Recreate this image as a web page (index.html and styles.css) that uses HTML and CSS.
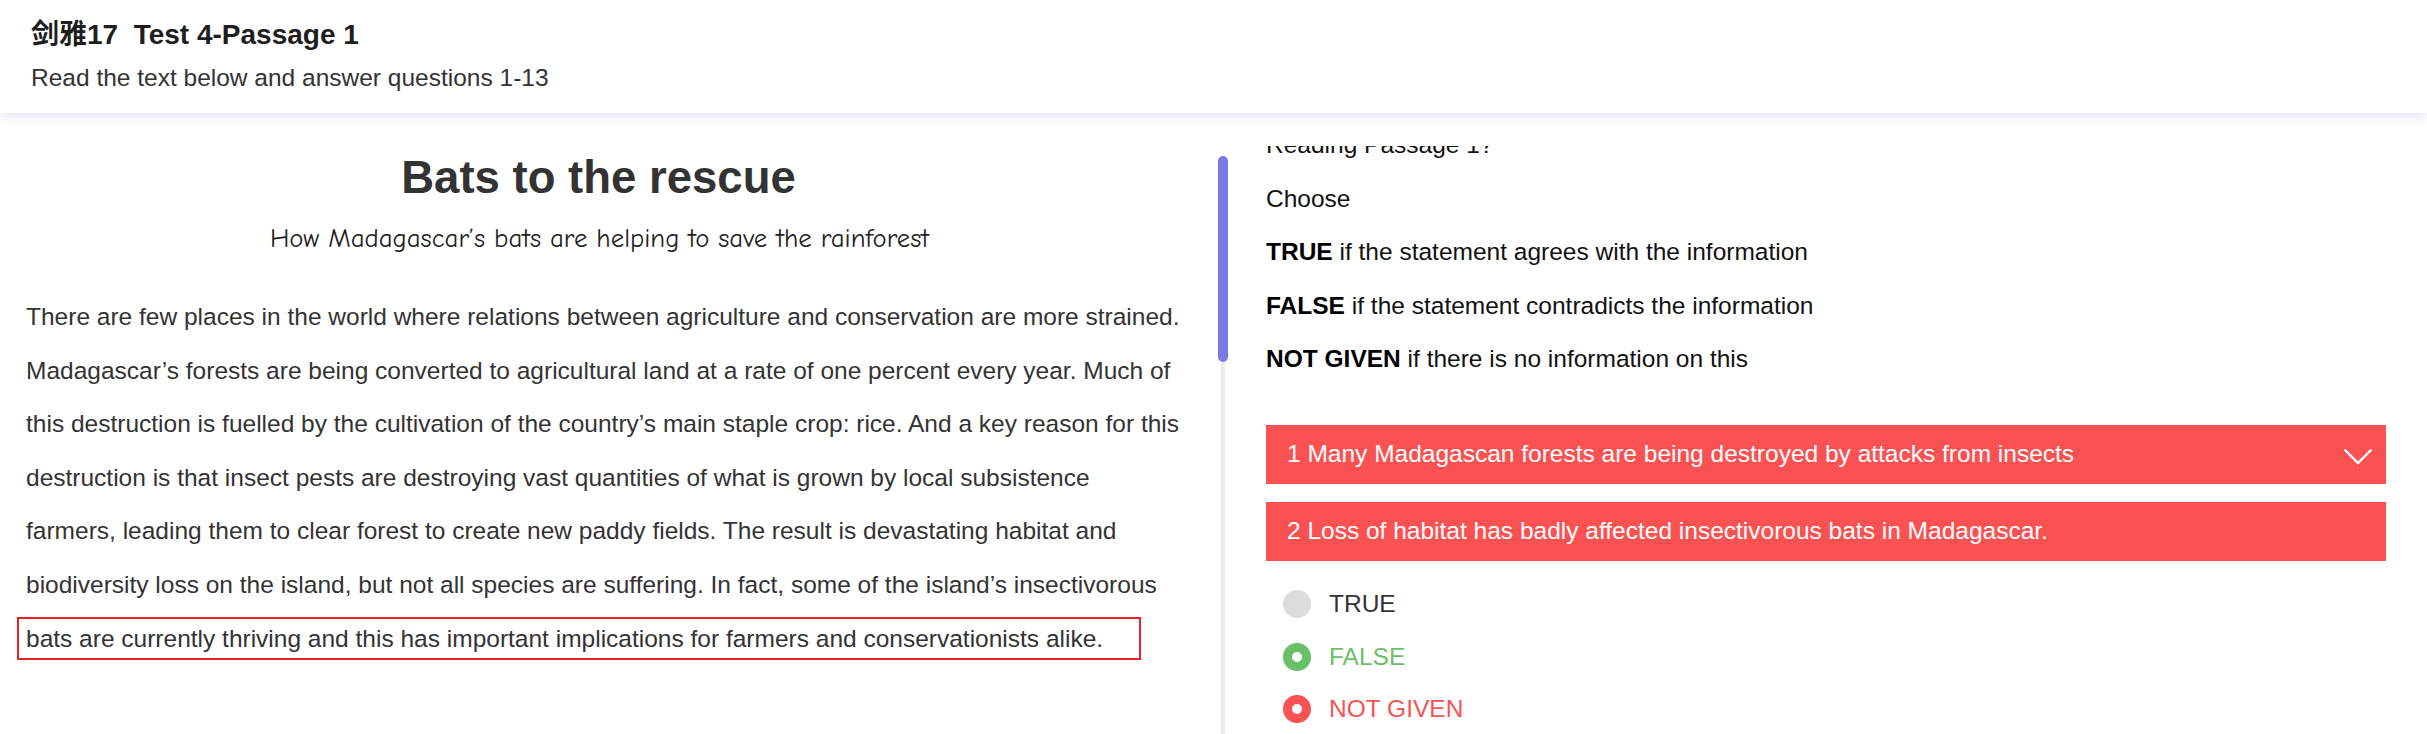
FILE: index.html
```html
<!DOCTYPE html>
<html lang="en">
<head>
<meta charset="utf-8">
<title>剑雅17 Test 4-Passage 1</title>
<link rel="stylesheet" href="styles.css">
</head>
<body>
<header class="top">
  <h1 class="top-title">剑雅17&nbsp;&nbsp;Test 4-Passage 1</h1>
  <p class="top-sub">Read the text below and answer questions 1-13</p>
</header>
<main class="layout">
  <section class="passage">
    <h2 class="passage-title">Bats to the rescue</h2>
    <p class="passage-sub">How Madagascar’s bats are helping to save the rainforest</p>
    <p class="passage-body">There are few places in the world where relations between agriculture and conservation are more strained. Madagascar’s forests are being converted to agricultural land at a rate of one percent every year. Much of this destruction is fuelled by the cultivation of the country’s main staple crop: rice. And a key reason for this destruction is that insect pests are destroying vast quantities of what is grown by local subsistence farmers, leading them to clear forest to create new paddy fields. The result is devastating habitat and biodiversity loss on the island, but not all species are suffering. In fact, some of the island’s insectivorous <span class="mark">bats are currently thriving and this has important implications for farmers and conservationists alike.</span></p>
  </section>
  <div class="scrollbar">
    <div class="scroll-thumb"></div>
    <div class="scroll-track"></div>
  </div>
  <section class="questions">
    <div class="questions-inner">
      <p class="q-line">Reading Passage 1?</p>
      <p class="q-line">Choose</p>
      <p class="q-line"><b>TRUE</b> if the statement agrees with the information</p>
      <p class="q-line"><b>FALSE</b> if the statement contradicts the information</p>
      <p class="q-line"><b>NOT GIVEN</b> if there is no information on this</p>
      <div class="q-bar q-bar-first">
        <span>1 Many Madagascan forests are being destroyed by attacks from insects</span>
        <svg class="chev" width="30" height="17" viewBox="0 0 30 17" aria-hidden="true"><polyline points="1.5,1.5 15,15 28.5,1.5" fill="none" stroke="#fff" stroke-width="2.4"/></svg>
      </div>
      <div class="q-bar">
        <span>2 Loss of habitat has badly affected insectivorous bats in Madagascar.</span>
      </div>
      <ul class="options">
        <li class="opt"><span class="dot dot-empty"></span><span class="opt-label">TRUE</span></li>
        <li class="opt opt-green"><span class="dot dot-green"></span><span class="opt-label">FALSE</span></li>
        <li class="opt opt-red"><span class="dot dot-red"></span><span class="opt-label">NOT GIVEN</span></li>
      </ul>
    </div>
  </section>
</main>
</body>
</html>
```
FILE: styles.css
```css
html, body {
  margin: 0;
  padding: 0;
}
body {
  width: 2427px;
  height: 734px;
  overflow: hidden;
  background: #fff;
  font-family: "Liberation Sans", Arial, Helvetica, "Noto Sans CJK SC", sans-serif;
  font-size: 24.5px;
  color: #333;
}

/* header */
.top {
  position: relative;
  z-index: 2;
  box-sizing: border-box;
  height: 113px;
  padding: 19px 31px 0;
  background: #fff;
  box-shadow: 0 3px 12px rgba(110, 110, 210, 0.2);
}
.top-title {
  margin: 0;
  font-size: 28px;
  line-height: 32px;
  font-weight: bold;
  color: #1e1e1e;
  font-family: "Liberation Sans", "Noto Sans CJK SC", sans-serif;
}
.top-sub {
  margin: 12px 0 0;
  font-size: 24.5px;
  line-height: 30px;
  color: #333;
}

/* layout */
.layout {
  display: flex;
  height: 621px;
}

/* left passage */
.passage {
  box-sizing: border-box;
  width: 1209px;
  flex: none;
  padding: 0 26px;
}
.passage-title {
  margin: 38px 0 0;
  padding-right: 12px;
  font-size: 45.5px;
  line-height: 54px;
  font-weight: bold;
  text-align: center;
  color: #333;
}
.passage-sub {
  margin: 18px 0 0;
  padding-right: 10px;
  font-family: "Comic Sans MS", "Comic Neue", "Lato", sans-serif;
  font-size: 26.8px;
  line-height: 32px;
  text-align: center;
  color: #222;
}
.passage-body {
  margin: 35px 0 0;
  font-size: 24.5px;
  line-height: 53.6px;
  color: #333;
}
.mark {
  margin-left: -9px;
  padding: 6px 36px 6px 7px;
  border: 2px solid #e8202a;
}

/* scrollbar */
.scrollbar {
  flex: none;
  width: 10px;
  margin-left: 9px;
  padding-top: 43px;
  display: flex;
  flex-direction: column;
  align-items: center;
}
.scroll-thumb {
  width: 10px;
  height: 206px;
  border-radius: 5px;
  background: #7b79e3;
}
.scroll-track {
  flex: 1;
  width: 4px;
  background: #ececec;
}

/* right questions */
.questions {
  flex: none;
  width: 1120px;
  margin: 33px 0 0 38px;
  overflow: hidden;
  color: #111;
}
.questions-inner {
  margin-top: -28px;
}
.q-line {
  margin: 0;
  font-size: 24.5px;
  line-height: 53.6px;
}
.q-line b {
  color: #000;
}
.q-bar {
  display: flex;
  align-items: center;
  justify-content: space-between;
  box-sizing: border-box;
  height: 59px;
  padding: 0 13px 0 21px;
  background: #fa5252;
  color: #fff;
  font-size: 24.5px;
  margin-top: 18px;
}
.q-bar-first {
  margin-top: 39px;
}
.chev {
  margin-top: 5px;
}
.options {
  list-style: none;
  margin: 17px 0 0;
  padding: 0;
}
.opt {
  display: flex;
  align-items: center;
  height: 52.5px;
  padding-left: 17px;
  color: #333;
  font-size: 24.5px;
}
.dot {
  box-sizing: border-box;
  width: 28px;
  height: 28px;
  border-radius: 50%;
  margin-right: 18px;
  flex: none;
}
.dot-empty {
  background: #dcdcdc;
}
.dot-green {
  background: #fff;
  border: 9px solid #6abf69;
}
.dot-red {
  background: #fff;
  border: 9px solid #fa5252;
}
.opt-green {
  color: #6abf69;
}
.opt-red {
  color: #fa5252;
}
```
